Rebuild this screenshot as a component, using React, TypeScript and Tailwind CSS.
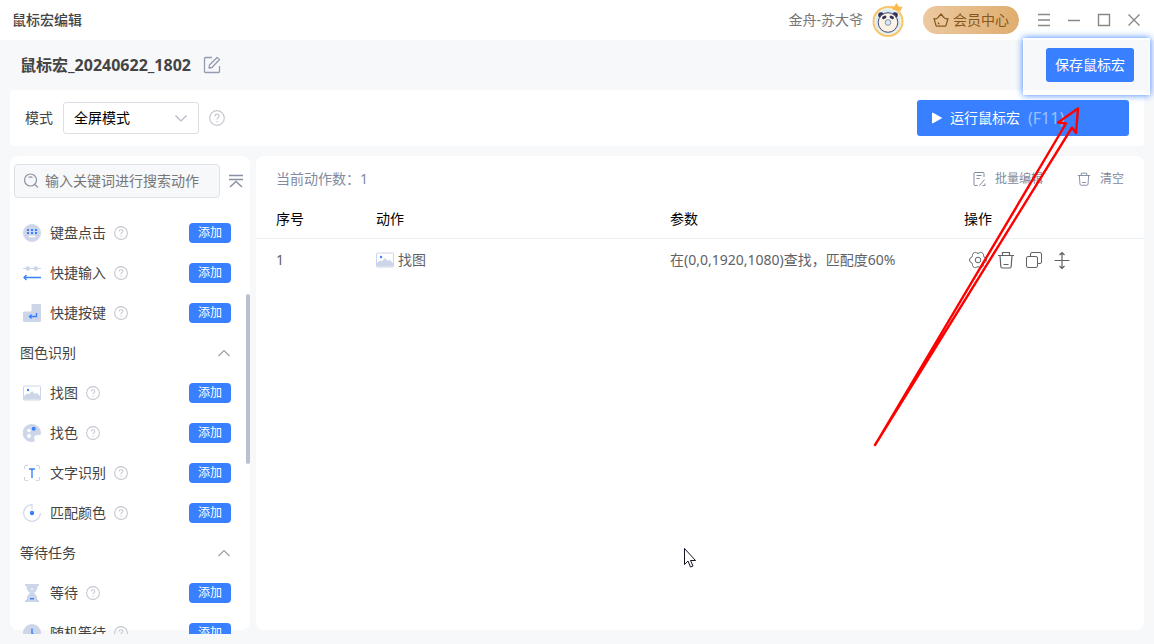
import React from 'react';

const Svg: React.FC<{ className?: string; box?: string; children: React.ReactNode }> = ({
  className = '',
  box = '0 0 18 18',
  children,
}) => (
  <svg viewBox={box} className={`shrink-0 ${className}`} fill="none" stroke="currentColor" aria-hidden="true">
    {children}
  </svg>
);

const HelpIcon: React.FC<{ className: string }> = ({ className }) => (
  <Svg className={className} box="0 0 16 16">
    <circle cx="8" cy="8" r="7.3" strokeWidth="1.2" />
    <path d="M5.9 6.3c0-1.3.9-2.1 2.1-2.1s2.1.8 2.1 1.9c0 1.5-2.1 1.6-2.1 3.3" strokeWidth="1.2" />
    <path d="M8 10.9v1.3" strokeWidth="1.2" />
  </Svg>
);

const TrashIcon: React.FC<{ className: string }> = ({ className }) => (
  <Svg className={className}>
    <path
      d="M1 4.5h16M5.5 4.5V1.5h7v3M3 4.5l.8 11c.1.9.6 1.5 1.5 1.5h7.4c.9 0 1.4-.6 1.5-1.5l.8-11M6.5 13.5h5"
      strokeWidth="1.2"
    />
  </Svg>
);

const PictureIcon: React.FC<{ className: string }> = ({ className }) => (
  <Svg className={className}>
    <rect x=".5" y="2" width="17" height="14" rx="1" stroke="#cdd5e8" />
    <path d="M1 12l3-2.5 2 .8L9 7l3 3 1.500-1.200L17 12v3.500H1z" fill="#cdd5e8" stroke="none" />
    <circle cx="5" cy="6" r="1.2" fill="#3880ff" stroke="none" />
  </Svg>
);

const KeyboardIcon = () => (
  <Svg className="h-[18px] w-[18px]">
    <circle cx="9" cy="9" r="9" fill="#cdd5e8" stroke="none" />
    <path d="M4 6h2M8 6h2M12 6h2M4 9h2M8 9h2M12 9h2" stroke="#3880ff" strokeWidth="2" />
    <path d="M6 12.5h6" stroke="#fff" strokeWidth="1.5" />
  </Svg>
);

const QuickInputIcon = () => (
  <Svg className="h-[18px] w-[18px]">
    <path d="M0 4.5h18" stroke="#cdd5e8" />
    <circle cx="4.7" cy="4.5" r="2.3" fill="#cdd5e8" stroke="none" />
    <circle cx="12.7" cy="4.5" r="2.3" fill="#cdd5e8" stroke="none" />
    <path d="M18 13.5H1M3.5 11L1 13.5 3.5 16" stroke="#3880ff" strokeWidth="1.3" />
  </Svg>
);

const QuickKeyIcon = () => (
  <Svg className="h-[18px] w-[18px]">
    <path d="M8.5 0H17q1 0 1 1v16q0 1-1 1H1q-1 0-1-1V8.500q0-1 1-1h7.500z" fill="#cdd5e8" stroke="none" />
    <path d="M13.5 9v3.5H7M8.500 10.500L6.500 12.500 8.500 14.500" stroke="#3880ff" strokeWidth="1.4" />
  </Svg>
);

const PaletteIcon = () => (
  <Svg className="h-[18px] w-[18px]">
    <path
      d="M9 0a9 9 0 1 0 1.5 17.8c1.6-.4 1.3-2 .8-3.2-.6-1.7.3-3.1 2-3.3l3-.3c1.200-.1 1.700-.8 1.700-2A9 9 0 0 0 9 0z"
      fill="#cdd5e8"
      stroke="none"
    />
    <circle cx="6" cy="6.5" r="1.7" fill="#fff" stroke="none" />
    <circle cx="6" cy="12" r="2" fill="#fff" stroke="none" />
    <circle cx="10.7" cy="4.8" r="2" fill="#3880ff" stroke="none" />
  </Svg>
);

const TextScanIcon = () => (
  <Svg className="h-[18px] w-[18px]">
    <path
      d="M1.5 5V3q0-1.5 1.5-1.5h2M13 1.5h2q1.500 0 1.500 1.500v2M16.500 13v2q0 1.500-1.500 1.500h-2M5 16.500H3q-1.500 0-1.500-1.500v-2"
      stroke="#cdd5e8"
      strokeWidth="1.2"
    />
    <path d="M6 5h6M9 5v9" stroke="#3880ff" strokeWidth="1.4" />
  </Svg>
);

const MatchColorIcon = () => (
  <Svg className="h-[18px] w-[18px]">
    <path d="M9 5.5V.6A8.400 8.400 0 1 0 17.400 9" stroke="#cdd5e8" strokeWidth="1.2" />
    <circle cx="9" cy="9" r="2.2" fill="#3880ff" stroke="none" />
  </Svg>
);

const HourglassIcon = () => (
  <Svg className="h-[18px] w-[18px]">
    <path
      d="M2 0h14v2h-1.5c0 3-1 5-3.5 7 2.5 2 3.5 4 3.5 7H16v2H2v-2h1.5c0-3 1-5 3.500-7-2.500-2-3.500-4-3.500-7H2z"
      fill="#cdd5e8"
      stroke="none"
    />
    <path d="M7 5.5l2-1.500 2 1.500z" fill="#fff" stroke="none" />
    <path d="M7 14.7h4" stroke="#3880ff" strokeWidth="1.5" />
  </Svg>
);

const ClockIcon = () => (
  <Svg className="h-[18px] w-[18px]">
    <circle cx="9" cy="9" r="9" fill="#cdd5e8" stroke="none" />
    <path d="M9 4.5v5l3 2" stroke="#3880ff" strokeWidth="1.4" />
  </Svg>
);

const Avatar = () => (
  <Svg className="h-9 w-8" box="0 0 32 36">
    <circle cx="16" cy="19.5" r="14.5" fill="#d6ecfb" stroke="#f9c56b" strokeWidth="2" />
    <circle cx="16" cy="19.5" r="12.8" stroke="#fff3cf" />
    <circle cx="9" cy="13" r="2.8" fill="#35305c" stroke="none" />
    <circle cx="23" cy="13" r="2.8" fill="#35305c" stroke="none" />
    <circle cx="16" cy="20.5" r="9.8" fill="#fdf3e4" stroke="#4d4870" />
    <path d="M11.5 15.8l1.500-.8M20.500 15.800L19 15" stroke="#35305c" strokeWidth="2.8" strokeLinecap="round" />
    <circle cx="16" cy="20.5" r="2.8" fill="#d6ecfb" stroke="#8591b0" />
    <path d="M18.5 3.5l3.500 1.300L24.500 1l2.500 4 3.500-.5L28.500 9l-7-1z" fill="#fdb94e" stroke="none" />
  </Svg>
);

interface Action {
  name: string;
  icon: React.ReactNode;
}

const quickActions: Action[] = [
  { name: '键盘点击', icon: <KeyboardIcon /> },
  { name: '快捷输入', icon: <QuickInputIcon /> },
  { name: '快捷按键', icon: <QuickKeyIcon /> },
];

const imageActions: Action[] = [
  { name: '找图', icon: <PictureIcon className="h-[18px] w-[18px]" /> },
  { name: '找色', icon: <PaletteIcon /> },
  { name: '文字识别', icon: <TextScanIcon /> },
  { name: '匹配颜色', icon: <MatchColorIcon /> },
];

const waitActions: Action[] = [
  { name: '等待', icon: <HourglassIcon /> },
  { name: '随机等待', icon: <ClockIcon /> },
];

const ActionList: React.FC<{ items: Action[] }> = ({ items }) => (
  <ul>
    {items.map((item) => (
      <li key={item.name} className="flex h-10 items-center pr-[19px] pl-[13px]">
        {item.icon}
        <span className="mr-2 ml-[9px]">{item.name}</span>
        <HelpIcon className="h-[14px] w-[14px] text-[#c4c7cf]" />
        <button type="button" className="ml-auto h-5 w-[42px] rounded-[4px] bg-[#3880ff] text-xs leading-5 text-white">
          添加
        </button>
      </li>
    ))}
  </ul>
);

const GroupTitle: React.FC<{ title: string }> = ({ title }) => (
  <button type="button" className="flex h-10 w-full items-center justify-between pr-5 pl-[10px]">
    {title}
    <Svg className="h-3 w-3 text-[#9a9fad]" box="0 0 12 12">
      <path d="M.5 9L6 3.5 11.5 9" strokeWidth="1.2" />
    </Svg>
  </button>
);

const TitleBar = () => (
  <header className="flex h-10 shrink-0 items-center bg-white pr-[13px] pl-3">
    <h1 className="text-sm font-medium">鼠标宏编辑</h1>
    <span className="mr-[9px] ml-auto text-[#777]">金舟-苏大爷</span>
    <Avatar />
    <button
      type="button"
      className="ml-[19px] flex h-7 w-24 items-center justify-center gap-1 rounded-full bg-linear-to-r from-[#ecc9a0] to-[#dfad6e] text-[#85581f]"
    >
      <Svg className="h-4 w-4" box="0 0 16 16">
        <path
          d="M3 13.5L1 6.5q2.500 1 4-1L8 2l3 3.500q1.500 2 4 1l-2 7q-.2.7-1 .7H4q-.8 0-1-.7zM5 10.500q.5 1.500 1.500 1.500"
          strokeWidth="1.2"
          strokeLinejoin="round"
        />
      </Svg>
      会员中心
    </button>
    <div className="ml-[18px] flex gap-4 text-[#888]">
      <button type="button" aria-label="菜单">
        <Svg className="h-[14px] w-[14px]" box="0 0 14 14">
          <path d="M1 1.5h12M1 7h12M1 12.5h12" strokeWidth="1.5" />
        </Svg>
      </button>
      <button type="button" aria-label="最小化">
        <Svg className="h-[14px] w-[14px]" box="0 0 14 14">
          <path d="M1 7.5h12" strokeWidth="1.5" />
        </Svg>
      </button>
      <button type="button" aria-label="最大化">
        <Svg className="h-[14px] w-[14px]" box="0 0 14 14">
          <path d="M1.5 1.5h11v11h-11z" strokeWidth="1.4" />
        </Svg>
      </button>
      <button type="button" aria-label="关闭">
        <Svg className="h-[14px] w-[14px]" box="0 0 14 14">
          <path d="M1.5 1.5l11 11M12.5 1.5l-11 11" strokeWidth="1.4" />
        </Svg>
      </button>
    </div>
  </header>
);

const Toolbar = () => (
  <section className="flex h-14 shrink-0 items-center rounded bg-white px-[15px]">
    <label htmlFor="mode">模式</label>
    <div className="relative ml-[10px]">
      <select
        id="mode"
        className="h-8 w-[136px] appearance-none rounded-[3px] border border-[#dcdfe6] bg-white pl-[10px] text-black"
      >
        <option>全屏模式</option>
      </select>
      <Svg className="pointer-events-none absolute top-[10px] right-3 h-3 w-3 text-[#b5b9c4]" box="0 0 12 12">
        <path d="M.5 3.5L6 9l5.5-5.5" strokeWidth="1.2" />
      </Svg>
    </div>
    <HelpIcon className="ml-[10px] h-4 w-4 text-[#c4c7cf]" />
    <button
      type="button"
      className="ml-auto flex h-9 w-[212px] items-center rounded-[3px] bg-[#3880ff] pl-[14px] text-white"
    >
      <Svg className="h-3 w-3" box="0 0 12 12">
        <path d="M1.5 1l9 5-9 5z" fill="currentColor" strokeLinejoin="round" />
      </Svg>
      <span className="ml-[7px]">运行鼠标宏</span>
      <span className="ml-2 text-base text-[#9cc0ff]">(F11)</span>
    </button>
  </section>
);

const Sidebar = () => (
  <aside className="relative flex w-60 shrink-0 flex-col rounded-lg bg-white pt-2">
    <div className="flex items-center pr-[6px] pl-1">
      <label className="flex h-[34px] min-w-0 flex-1 items-center rounded-[4px] border border-[#dfe1e8] bg-[#f7f8fa] pl-2">
        <Svg className="h-4 w-4 text-[#8f94a3]" box="0 0 16 16">
          <circle cx="7.5" cy="7" r="6" strokeWidth="1.2" />
          <path d="M11.8 11.5L15 14.500M5.500 4.500q2-1.200 4 0" strokeWidth="1.2" />
        </Svg>
        <input
          type="search"
          aria-label="搜索动作"
          placeholder="输入关键词进行搜索动作"
          className="ml-[6px] min-w-0 flex-1 bg-transparent outline-none placeholder:text-[#777]"
        />
      </label>
      <button type="button" aria-label="全部收起" className="ml-2">
        <Svg className="h-4 w-4 text-[#8b91a5]" box="0 0 16 16">
          <path d="M1 2.5h14M1 6.5h14M2 14l6-5.500 6 5.500" strokeWidth="1.5" />
        </Svg>
      </button>
    </div>
    {/* rows run a little past the card's lower edge */}
    <div className="mt-[15px] -mb-1 min-h-0 flex-1 overflow-hidden">
      <ActionList items={quickActions} />
      <GroupTitle title="图色识别" />
      <ActionList items={imageActions} />
      <GroupTitle title="等待任务" />
      <ActionList items={waitActions} />
    </div>
    <div className="absolute top-[138px] right-0 h-[170px] w-1 rounded-full bg-[#b9c0d0]" />
  </aside>
);

const iconButton = 'flex h-4 w-4 items-center justify-center';

const ActionTable = () => (
  <main className="flex min-w-0 flex-1 flex-col rounded-lg bg-white">
    <div className="flex h-[45px] items-center px-5 text-[#818b9f]">
      <span>当前动作数：1</span>
      <button type="button" className="ml-auto flex items-center gap-[9px] text-xs">
        <Svg className="h-[14px] w-[14px]" box="0 0 14 14">
          <path d="M12 5V1.500q0-1-1-1H3q-1 0-1 1v11q0 1 1 1h2.500M4.500 3.500h5M4.500 6.500h3M7.500 13.500l5-6M10.500 13.500h2.500v-2" />
        </Svg>
        批量编辑
      </button>
      <button type="button" className="ml-[34px] flex items-center gap-[9px] text-xs">
        <TrashIcon className="h-[14px] w-[14px]" />
        清空
      </button>
    </div>
    <table className="w-full table-fixed text-left">
      <thead>
        <tr className="h-[37px] border-b border-[#f0f1f4] text-black">
          <th className="w-[120px] pl-5 font-normal">序号</th>
          <th className="font-normal">动作</th>
          <th className="font-normal">参数</th>
          <th className="w-[180px] font-normal">操作</th>
        </tr>
      </thead>
      <tbody>
        <tr className="h-11 text-[#606266]">
          <td className="pl-5">1</td>
          <td>
            <span className="flex items-center gap-1">
              <PictureIcon className="h-[18px] w-[18px]" />
              找图
            </span>
          </td>
          <td className="whitespace-nowrap">在(0,0,1920,1080)查找，匹配度60%</td>
          <td>
            <span className="flex gap-3 pl-[6px]">
              <button type="button" aria-label="设置" className={iconButton}>
                <Svg className="h-[18px] w-[18px]">
                  <path
                    d="M5.500 1.500q1.200-.5 2 .3 1.500 1 3 0 .8-.8 2-.3l1.500 1q.8.600.5 2 0 1.500 1.500 2.200 1.200.5 1.300 1.300v2q-.1.800-1.300 1.300-1.500.7-1.500 2.200.3 1.400-.5 2l-1.500 1q-1.200.5-2-.3-1.500-1-3 0-.8.8-2 .3l-1.500-1q-.8-.6-.5-2 0-1.500-1.500-2.200Q.8 10.800.7 10V8q.1-.8 1.300-1.300 1.500-.7 1.500-2.200-.3-1.400.5-2z"
                    strokeLinejoin="round"
                  />
                  <circle cx="9" cy="9" r="2.8" />
                </Svg>
              </button>
              <button type="button" aria-label="删除" className={iconButton}>
                <TrashIcon className="h-[18px] w-[18px]" />
              </button>
              <button type="button" aria-label="复制" className={iconButton}>
                <Svg className="h-[18px] w-[18px]">
                  <rect x="1.5" y="5.5" width="11" height="11" rx="1.5" />
                  <path d="M5.5 5V3q0-1.500 1.500-1.500h8q1.500 0 1.500 1.500v8q0 1.500-1.500 1.500h-2" />
                </Svg>
              </button>
              <button type="button" aria-label="移动" className={iconButton}>
                <Svg className="h-[18px] w-[18px]">
                  <path d="M1.5 9.5h15M9 1.500v16M6.500 4L9 1.500 11.500 4M6.500 15L9 17.500l2.500-2.500" strokeWidth="1.2" />
                </Svg>
              </button>
            </span>
          </td>
        </tr>
      </tbody>
    </table>
  </main>
);

const App: React.FC = () => {
  return (
    <div className="relative flex h-screen flex-col overflow-hidden bg-[#f7f8fa] font-['Noto_Sans','Noto_Sans_CJK_SC',sans-serif] text-sm text-[#444]">
      <TitleBar />
      <div className="flex min-h-0 flex-1 flex-col px-[10px] pb-[14px]">
        <div className="flex h-[50px] shrink-0 items-center pl-[10px]">
          <h2 className="text-base font-bold">鼠标宏_20240622_1802</h2>
          <button type="button" aria-label="重命名" className="ml-3 text-[#949bb0]">
            <Svg className="h-[18px] w-[18px]">
              <path
                d="M9 1.5H2.500q-1 0-1 1v13q0 1 1 1h13q1 0 1-1V10M6 12l.5-3L14 1.500l2.500 2L9 11.500z"
                strokeWidth="1.3"
                strokeLinejoin="round"
              />
            </Svg>
          </button>
        </div>
        <Toolbar />
        <div className="mt-[10px] flex min-h-0 flex-1 gap-[6px]">
          <Sidebar />
          <ActionTable />
        </div>
      </div>

      {/* spotlight around the save button */}
      <div className="absolute top-[38px] right-1 flex h-[57px] w-[127px] items-start justify-end border border-white pt-[9px] pr-[15px] shadow-[0_0_7px_#3880ff]">
        <button type="button" className="h-[34px] w-[88px] rounded-[3px] bg-[#3880ff] text-white">
          保存鼠标宏
        </button>
      </div>
      <Svg
        className="pointer-events-none absolute top-[105px] right-[70px] h-[345px] w-[214px] text-[#f00]"
        box="0 0 214 345"
      >
        <path
          d="M5 340L196 18.5l-8-1L208 3.500l-2 24.500-4-5.500L5 340"
          strokeWidth="2.4"
          strokeLinejoin="round"
          strokeLinecap="round"
        />
      </Svg>
      <Svg className="pointer-events-none absolute top-[548px] left-[684px] h-5 w-3" box="0 0 12 20">
        <path d="M.5.5v16l3.500-3.500 2.500 6 2.500-1-2.500-5.500h5z" fill="#fff" stroke="#112" />
      </Svg>
    </div>
  );
};

export default App;
